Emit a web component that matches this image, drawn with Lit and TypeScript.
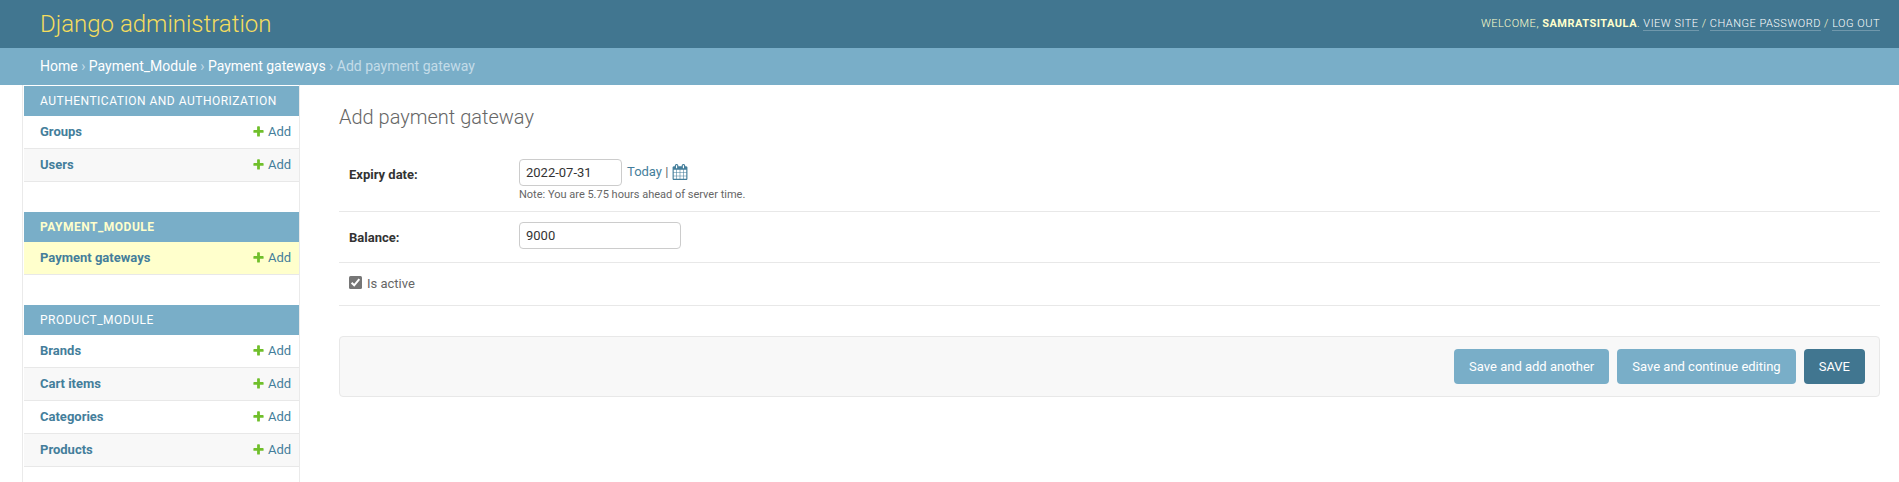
import { LitElement, html, css } from "lit";
import { customElement, property } from "lit/decorators.js";
import { classMap } from "lit/directives/class-map.js";

interface AppModule {
  name: string;
  models: string[];
  current?: boolean;
}

const MODULES: AppModule[] = [
  { name: "Authentication and Authorization", models: ["Groups", "Users"] },
  { name: "Payment_Module", models: ["Payment gateways"], current: true },
  { name: "Product_Module", models: ["Brands", "Cart items", "Categories", "Products"] },
];

@customElement("admin-header")
class AdminHeader extends LitElement {
  static styles = css`
    :host {
      display: block;
      flex: none;
    }
    .bar {
      display: flex;
      align-items: center;
      justify-content: space-between;
      height: 48px;
      padding: 0 19px 0 40px;
      box-sizing: border-box;
      background: #417690;
      color: #ffc;
    }
    .brand {
      margin: 0;
      font-size: 24px;
      font-weight: 300;
      line-height: 48px;
      color: #f5dd5d;
    }
    .tools {
      font-size: 11px;
      font-weight: 300;
      line-height: 14px;
      letter-spacing: 0.5px;
      text-transform: uppercase;
      padding-bottom: 1px;
    }
    .tools strong {
      font-weight: 700;
    }
    .tools a {
      color: #fff;
      border-bottom: 1px solid rgba(255, 255, 255, 0.25);
    }
    .crumbs {
      height: 37px;
      line-height: 36px;
      padding-left: 40px;
      background: #79aec8;
      color: #c4dce8;
      font-size: 14px;
    }
    .crumbs a {
      color: #fff;
    }
  `;

  render() {
    return html`
      <div class="bar">
        <h1 class="brand">Django administration</h1>
        <div class="tools">
          Welcome, <strong>samratsitaula</strong>. <a>View site</a> / <a>Change password</a> /
          <a>Log out</a>
        </div>
      </div>
      <div class="crumbs">
        <a>Home</a> › <a>Payment_Module</a> › <a>Payment gateways</a> › Add payment gateway
      </div>
    `;
  }
}

@customElement("admin-sidebar")
class AdminSidebar extends LitElement {
  @property({ attribute: false }) modules: AppModule[] = [];

  static styles = css`
    :host {
      display: block;
      flex: none;
      box-sizing: border-box;
      width: 278px;
      margin-left: 22px;
      padding: 1px 0 0 1px;
      border: solid #eaeaea;
      border-width: 0 1px;
      overflow: hidden;
    }
    .module {
      margin-bottom: 30px;
    }
    .caption {
      height: 30px;
      line-height: 30px;
      padding-left: 16px;
      background: #79aec8;
      color: #fff;
      font-size: 12px;
      letter-spacing: 0.5px;
      text-transform: uppercase;
    }
    .row {
      display: flex;
      align-items: center;
      justify-content: space-between;
      box-sizing: border-box;
      height: 33px;
      padding: 0 8px 0 16px;
      border-bottom: 1px solid #e8e8e8;
      font-size: 13px;
      line-height: 16px;
      color: #447e9b;
    }
    .row:nth-child(odd) {
      background: #f8f8f8;
    }
    .name {
      font-weight: 700;
    }
    .add {
      display: flex;
      align-items: flex-start;
      gap: 3px;
      width: 39px;
    }
    .plus {
      display: block;
      flex: none;
      margin-top: 1px;
    }
    .current .caption {
      color: #ffc;
      font-weight: 700;
    }
    .current .row {
      background: #ffc;
    }
  `;

  render() {
    return this.modules.map(
      (m) => html`
        <div class=${classMap({ module: true, current: !!m.current })}>
          <div class="caption">${m.name}</div>
          ${m.models.map(
            (name) => html`
              <div class="row">
                <a class="name">${name}</a>
                <a class="add">
                  <svg class="plus" width="13" height="13" viewBox="0 0 1792 1792">
                    <path
                      fill="#70bf2b"
                      d="M1600 796v192q0 40-28 68t-68 28h-416v416q0 40-28 68t-68 28h-192q-40 0-68-28t-28-68v-416h-416q-40 0-68-28t-28-68v-192q0-40 28-68t68-28h416v-416q0-40 28-68t68-28h192q40 0 68 28t28 68v416h416q40 0 68 28t28 68z"
                    />
                  </svg>
                  Add
                </a>
              </div>
            `
          )}
        </div>
      `
    );
  }
}

@customElement("gateway-form")
class GatewayForm extends LitElement {
  static styles = css`
    :host {
      display: block;
      flex: 1;
      padding: 20px 19px 0 39px;
    }
    .title {
      margin: 0 0 20px;
      font-size: 20px;
      font-weight: 300;
      line-height: 24px;
      color: #666;
    }
    .row {
      display: flex;
      align-items: flex-start;
      box-sizing: border-box;
      padding: 10px;
      border-bottom: 1px solid #e8e8e8;
      font-size: 13px;
    }
    .date {
      height: 63px;
    }
    .balance {
      height: 51px;
    }
    .active {
      height: 43px;
      padding: 13px 10px 0;
      line-height: 15px;
      color: #666;
    }
    .label {
      width: 170px;
      padding-top: 8px;
      line-height: 16px;
      font-weight: 700;
      color: #333;
    }
    .line {
      display: flex;
      align-items: flex-start;
    }
    input {
      display: block;
      box-sizing: border-box;
      height: 27px;
      margin: 0;
      padding: 5px 6px;
      border: 1px solid #ccc;
      border-radius: 4px;
      background: #fff;
      font: 13px Roboto, sans-serif;
      color: #333;
      outline: none;
    }
    .short {
      width: 103px;
    }
    .number {
      width: 162px;
    }
    .shortcuts {
      display: flex;
      align-items: flex-start;
      margin-left: 5px;
      line-height: 16px;
      padding-top: 5px;
      color: #447e9b;
      white-space: pre;
    }
    .links {
      width: 45px;
    }
    .bar {
      color: #666;
    }
    .calendar {
      display: block;
    }
    .note {
      margin-top: 2px;
      font-size: 11px;
      line-height: 14px;
      color: #666;
    }
    .tick {
      display: block;
      margin-right: 5px;
    }
    .submit {
      display: flex;
      justify-content: flex-end;
      align-items: center;
      gap: 8px;
      box-sizing: border-box;
      height: 61px;
      margin-top: 30px;
      padding: 0 14px;
      border: 1px solid #e8e8e8;
      border-radius: 4px;
      background: #f8f8f8;
    }
    button {
      height: 35px;
      padding: 0 15px;
      border: 0;
      border-radius: 4px;
      background: #79aec8;
      color: #fff;
      font: 13px Roboto, sans-serif;
    }
    .default {
      background: #417690;
      text-transform: uppercase;
    }
  `;

  render() {
    return html`
      <h1 class="title">Add payment gateway</h1>
      <div class="row date">
        <label class="label">Expiry date:</label>
        <div>
          <div class="line">
            <input class="short" type="text" .value=${"2022-07-31"} />
            <span class="shortcuts"
              ><span class="links"><a>Today</a><span class="bar"> |</span></span
              ><svg class="calendar" width="16" height="16" viewBox="0 0 1792 1792">
                <path
                  fill="#447e9b"
                  d="M192 1664h288v-288h-288v288zm352 0h320v-288h-320v288zm-352-352h288v-320h-288v320zm352 0h320v-320h-320v320zm-352-384h288v-288h-288v288zm736 736h320v-288h-320v288zm-384-736h320v-288h-320v288zm768 736h288v-288h-288v288zm-384-352h320v-320h-320v320zm-352-864v-288q0-13-9.5-22.5t-22.5-9.5h-64q-13 0-22.5 9.5t-9.5 22.5v288q0 13 9.5 22.5t22.5 9.5h64q13 0 22.5-9.5t9.5-22.5zm736 864h288v-320h-288v320zm-384-384h320v-288h-320v288zm384 0h288v-288h-288v288zm32-480v-288q0-13-9.5-22.5t-22.5-9.5h-64q-13 0-22.5 9.5t-9.5 22.5v288q0 13 9.5 22.5t22.5 9.5h64q13 0 22.5-9.5t9.5-22.5zm384-64v1280q0 52-38 90t-90 38h-1408q-52 0-90-38t-38-90v-1280q0-52 38-90t90-38h128v-96q0-66 47-113t113-47h64q66 0 113 47t47 113v96h384v-96q0-66 47-113t113-47h64q66 0 113 47t47 113v96h128q52 0 90 38t38 90z"
                /></svg
            ></span>
          </div>
          <div class="note">Note: You are 5.75 hours ahead of server time.</div>
        </div>
      </div>
      <div class="row balance">
        <label class="label">Balance:</label>
        <input class="number" type="text" .value=${"9000"} />
      </div>
      <div class="row active">
        <svg class="tick" width="13" height="13" viewBox="0 0 13 13">
          <rect width="13" height="13" rx="1.5" fill="#767676" />
          <path d="M2.6 6.8 5.2 9.3 10.3 3.2" fill="none" stroke="#fff" stroke-width="2" />
        </svg>
        <label>Is active</label>
      </div>
      <div class="submit">
        <button>Save and add another</button>
        <button>Save and continue editing</button>
        <button class="default">Save</button>
      </div>
    `;
  }
}

@customElement("app-root")
class AppRoot extends LitElement {
  static styles = css`
    :host {
      display: flex;
      flex-direction: column;
      height: 100vh;
      overflow: hidden;
      background: #fff;
      font-family: Roboto, sans-serif;
    }
    .main {
      display: flex;
      flex: 1;
      min-height: 0;
    }
  `;

  render() {
    return html`
      <admin-header></admin-header>
      <div class="main">
        <admin-sidebar .modules=${MODULES}></admin-sidebar>
        <gateway-form></gateway-form>
      </div>
    `;
  }
}
